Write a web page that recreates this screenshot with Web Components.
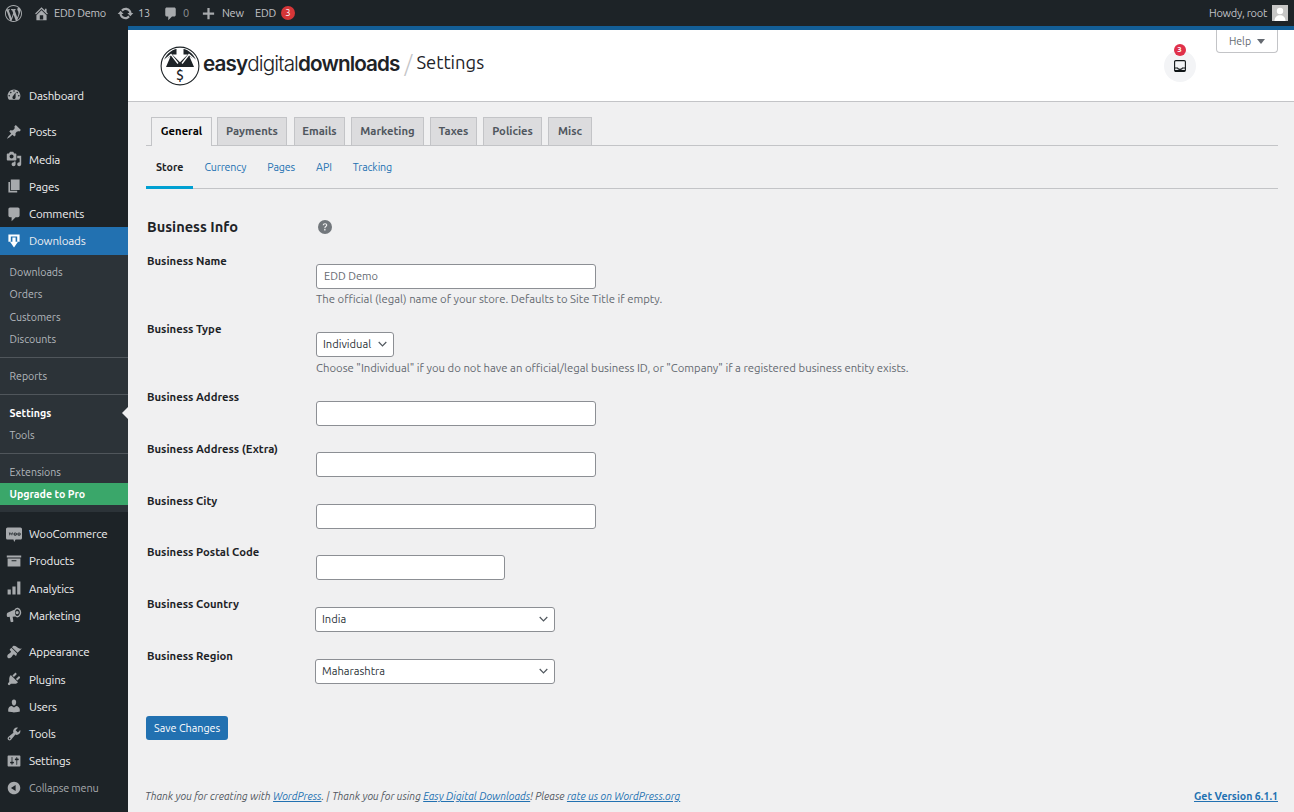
<!DOCTYPE html>
<html lang="en">
<head>
<meta charset="utf-8">
<title>Settings</title>
<style>
  html, body { margin: 0; height: 100%; background: #f0f0f1; }
  body { font-family: Ubuntu, "Noto Sans", sans-serif; font-size: 12px; color: #3c434a; overflow: hidden; }
  #shell { display: grid; grid-template-columns: 128px 1fr; grid-template-rows: 26px 786px; height: 812px; }
  wp-adminbar { grid-column: 1 / 3; }
</style>
</head>
<body>
<div id="shell">
  <wp-adminbar></wp-adminbar>
  <wp-sidebar></wp-sidebar>
  <edd-page></edd-page>
</div>

<script>
const ICONS = {
  wp: '<path d="M20 10c0-5.51-4.49-10-10-10C4.48 0 0 4.49 0 10c0 5.52 4.48 10 10 10 5.51 0 10-4.48 10-10zM7.78 15.37L4.37 6.22c.55-.02 1.17-.08 1.17-.08.5-.06.44-1.13-.06-1.11 0 0-1.45.11-2.37.11-.18 0-.37 0-.58-.01C4.12 2.69 6.87 1.11 10 1.11c2.33 0 4.45.87 6.05 2.34-.68-.11-1.65.39-1.65 1.58 0 .74.45 1.36.9 2.1.35.61.55 1.36.55 2.46 0 1.49-1.4 5-1.4 5l-3.03-8.37c.54-.02.82-.17.82-.17.5-.05.44-1.25-.06-1.22 0 0-1.44.12-2.38.12-.87 0-2.33-.12-2.33-.12-.5-.03-.56 1.2-.06 1.22l.92.08 1.26 3.41zM17.41 10c.24-.64.74-1.87.43-4.25.7 1.29 1.05 2.71 1.05 4.25 0 3.29-1.73 6.24-4.4 7.78.97-2.59 1.94-5.2 2.92-7.78zM6.1 18.09C3.12 16.65 1.11 13.53 1.11 10c0-1.3.23-2.48.72-3.59C3.25 10.3 4.67 14.2 6.1 18.09zm4.03-6.63l2.58 6.98c-.86.29-1.76.45-2.71.45-.79 0-1.57-.11-2.29-.33.81-2.38 1.62-4.74 2.42-7.1z"/>',
  home: '<path d="M16 8.5l1.53 1.53-1.06 1.06L10 4.62l-6.47 6.47-1.06-1.06L10 2.5l4 4v-2h2v4zm-6-2.46l6 5.99V18H4v-5.97zM12 17v-5H8v5h4z"/>',
  update: '<path d="M10.2 3.28c3.53 0 6.43 2.61 6.92 6h2.08l-3.5 4-3.5-4h2.32c-.45-1.97-2.21-3.45-4.32-3.45-1.45 0-2.73.71-3.54 1.78L4.95 5.66C6.23 4.2 8.11 3.28 10.2 3.28zm-.4 13.44c-3.52 0-6.43-2.61-6.92-6H.8l3.5-4c1.17 1.33 2.33 2.67 3.5 4H5.48c.45 1.97 2.21 3.45 4.32 3.45 1.45 0 2.73-.71 3.54-1.78l1.71 1.95c-1.28 1.46-3.15 2.38-5.25 2.38z"/>',
  comment: '<path d="M5 2h10c1.1 0 2 .9 2 2v8c0 1.1-.9 2-2 2h-3l-5 5v-5H5c-1.1 0-2-.9-2-2V4c0-1.1.9-2 2-2z"/>',
  plus: '<path d="M17.5 8.5v3h-6v6h-3v-6h-6v-3h6v-6h3v6h6z"/>',
  dashboard: '<path fill-rule="evenodd" d="M3.76 16h12.48c1.1-1.37 1.76-3.11 1.76-5 0-4.42-3.58-8-8-8s-8 3.58-8 8c0 1.89.66 3.63 1.76 5zM10 4c.55 0 1 .45 1 1s-.45 1-1 1-1-.45-1-1 .45-1 1-1zM6 6c.55 0 1 .45 1 1s-.45 1-1 1-1-.45-1-1 .45-1 1-1zm8 0c.55 0 1 .45 1 1s-.45 1-1 1-1-.45-1-1 .45-1 1-1zm-5.37 5.55L12 7v6c0 1.1-.9 2-2 2s-2-.9-2-2c0-.57.24-1.08.63-1.45zM4 10c.55 0 1 .45 1 1s-.45 1-1 1-1-.45-1-1 .45-1 1-1zm12 0c.55 0 1 .45 1 1s-.45 1-1 1-1-.45-1-1 .45-1 1-1z"/>',
  pin: '<path d="M10.44 3.02l1.82-1.82 6.36 6.35-1.83 1.82c-1.05-.68-2.48-.57-3.41.36l-.75.75c-.92.93-1.04 2.35-.35 3.41l-1.83 1.82-2.41-2.41-2.8 2.79c-.42.42-3.38 2.71-3.8 2.29s1.86-3.39 2.28-3.81l2.79-2.79L4.1 9.36l1.83-1.82c1.05.69 2.48.57 3.4-.36l.75-.75c.93-.92 1.05-2.35.36-3.41z"/>',
  media: '<path fill-rule="evenodd" d="M13 11V4c0-.55-.45-1-1-1h-1.67L9 1H5L3.67 3H2c-.55 0-1 .45-1 1v7c0 .55.45 1 1 1h10c.55 0 1-.45 1-1zM7 4.5c1.38 0 2.5 1.12 2.5 2.5S8.38 9.5 7 9.5 4.5 8.38 4.5 7 5.62 4.5 7 4.5zM14 6h5v10.5c0 1.38-1.12 2.5-2.5 2.5S14 17.88 14 16.5s1.12-2.5 2.5-2.5c.17 0 .34.02.5.05V9h-3V6zm-4 8.05V13h2v3.5c0 1.38-1.12 2.5-2.5 2.5S7 17.88 7 16.5 8.12 14 9.5 14c.17 0 .34.02.5.05z"/>',
  page: '<path d="M6 15V2h11v13H6zm-1 1h9v2H3V5h2v11z"/>',
  download: '<path d="M3 2h14v9h-3V4.500H6V11H3z"/><path d="M8 5.500h4V11h3l-5 7-5-7h3z"/>',
  woo: '<path fill-rule="evenodd" d="M2 2h16c1.100 0 2 .9 2 2v11c0 1.100-.9 2-2 2h-6l-1.800 3-.9-3H2c-1.100 0-2-.9-2-2V4c0-1.100.9-2 2-2zm1.500 6l1.200 4.300 1.400-3.200 1.400 3.200L8.600 8H7.500L7 10.100 6.100 8h-.2l-.9 2.100L4.500 8h-1zm8 0a2.100 2.100 0 100 4.300 2.100 2.100 0 000-4.300zm0 1.200a.9.9 0 110 1.800.9.9 0 010-1.800zm4.800-1.200a2.100 2.100 0 100 4.300 2.100 2.100 0 000-4.300zm0 1.200a.9.9 0 110 1.800.9.9 0 010-1.800z"/>',
  archive: '<path fill-rule="evenodd" d="M19 3v2.500H1V3h18zM2 7h16v10H2V7zm11 3V9H7v1.200h6V10z"/>',
  bars: '<path d="M2 12h4v6H2zM8 8h4v10H8zM14 2h4v16h-4z"/>',
  megaphone: '<path fill-rule="evenodd" d="M1 9c0-1 .6-1.600 1.600-2.100L11 3.200C11.600 1.900 12.700 1 14 1c2.800 0 5 2.900 5 6s-2.200 6-5 6c-.9 0-1.700-.4-2.300-1l-3.400.3.9 5.200c.1.6-.3 1.100-.9 1.200l-1.400.2c-.6.1-1-.2-1.200-.8L4.600 12.300 3 12.500C1.900 12.600 1 12 1 11V9zm13-6.300C12.300 2.700 11.300 4.800 11.300 7s1 4.300 2.700 4.300 3.300-2.100 3.300-4.300S15.700 2.700 14 2.700zM14 5a2 2 0 110 4 2 2 0 010-4z"/>',
  brush: '<path d="M14.48 11.06L7.41 3.99l1.5-1.5c.5-.56 2.3-.47 3.51.32 1.21.8 1.43 1.28 2.91 2.1 1.18.64 2.45 1.26 4.45.85zm-.71.71L6.7 4.7 4.93 6.47c-.39.39-.39 1.02 0 1.41l1.06 1.06c.39.39.39 1.03 0 1.42-.6.6-1.43 1.11-2.21 1.69-.35.26-.7.53-1.01.84-1.34 1.34-1.59 3.2-.55 4.3 1.1 1.04 2.96.79 4.3-.55.31-.31.58-.66.84-1.01.58-.78 1.09-1.61 1.69-2.21.39-.39 1.02-.39 1.41 0l1.06 1.06c.39.39 1.02.39 1.41 0z"/>',
  plugin: '<path d="M13.11 4.36L9.87 7.6 8 5.73l3.24-3.24c.35-.34 1.05-.2 1.56.32.52.51.66 1.21.31 1.55zm-8 1.77l.91-1.12 9.01 9.01-1.19.84c-.71.71-2.63 1.16-3.82 1.16H6.14L4.9 17.26c-.59.59-1.54.59-2.12 0-.59-.58-.59-1.53 0-2.12l1.24-1.24v-3.88c0-1.13.4-3.19 1.09-3.89zm7.26 3.97l3.24-3.24c.34-.35 1.04-.21 1.55.31.52.51.66 1.21.31 1.55l-3.24 3.25z"/>',
  users: '<path d="M10 9.25c-2.27 0-2.73-3.44-2.73-3.44C7 4.02 7.82 2 9.97 2c2.16 0 2.98 2.02 2.71 3.81 0 0-.41 3.44-2.68 3.44zm0 2.57L12.72 10c2.39 0 4.52 2.33 4.52 4.53v2.49s-3.65 1.13-7.24 1.13c-3.65 0-7.24-1.13-7.24-1.13v-2.49c0-2.25 1.94-4.48 4.47-4.48z"/>',
  tools: '<path fill-rule="evenodd" d="M16.68 9.77c-1.34 1.34-3.3 1.67-4.95.99l-5.41 6.52c-.99.99-2.59.99-3.58 0s-.99-2.59 0-3.57l6.52-5.42c-.68-1.65-.35-3.61.99-4.95 1.28-1.28 3.12-1.62 4.72-1.06l-2.89 2.89 2.82 2.82 2.86-2.87c.53 1.58.18 3.39-1.08 4.65zM3.81 16.21c.4.39 1.04.39 1.43 0 .4-.4.4-1.04 0-1.43-.39-.4-1.03-.4-1.43 0-.39.39-.39 1.03 0 1.43z"/>',
  settings: '<path fill-rule="evenodd" d="M18 16V4c0-.55-.45-1-1-1H3c-.55 0-1 .45-1 1v12c0 .55.45 1 1 1h14c.55 0 1-.45 1-1zM8 11h1c.55 0 1 .45 1 1s-.45 1-1 1H8v1.500c0 .28-.22.5-.5.5s-.5-.22-.5-.5V13H6c-.55 0-1-.45-1-1s.45-1 1-1h1V5.500c0-.28.22-.5.5-.5s.5.22.5.5V11zm5-2h-1c-.55 0-1-.45-1-1s.45-1 1-1h1V5.500c0-.28.22-.5.5-.5s.5.22.5.5V7h1c.55 0 1 .45 1 1s-.45 1-1 1h-1v5.500c0 .28-.22.5-.5.5s-.5-.22-.5-.5V9z"/>',
  collapse: '<path fill-rule="evenodd" d="M10 2.160c4.330 0 7.840 3.510 7.840 7.840s-3.510 7.840-7.840 7.840S2.160 14.330 2.160 10 5.710 2.160 10 2.160zm2 11.720V6.120L6.180 9.970z"/>'
};
const svg = (name, size) => `<svg width="${size}" height="${size}" viewBox="0 0 20 20" fill="currentColor" aria-hidden="true">${ICONS[name]}</svg>`;

class WpAdminbar extends HTMLElement {
  connectedCallback() {
    this.attachShadow({ mode: "open" }).innerHTML = `
      <style>
        :host { display: flex; align-items: center; height: 26px; background: #1d2327; color: #c3c4c7; font-size: 11px; letter-spacing: -.25px; }
        .item { display: flex; align-items: center; white-space: nowrap; }
        .item > span { margin-bottom: 1px; }
        svg { color: #a7aaad; flex: none; display: block; }
        .dim { color: #8c8f94; }
        .item > .badge { display: inline-block; width: 14px; height: 14px; line-height: 14px; border-radius: 50%; background: #d63638; color: #fff; font-size: 9.500px; text-align: center; margin: 0 0 0 5px; letter-spacing: 0; }
        .right { margin-left: auto; margin-right: 6px; gap: 5px; }
        .avatar { width: 16px; height: 16px; }
      </style>
      <div class="item" style="margin-left:5px">${svg("wp", 17)}</div>
      <div class="item" style="width:84px;margin-left:11px;gap:4px">${svg("home", 17)}<span>EDD Demo</span></div>
      <div class="item" style="width:46px;gap:4px">${svg("update", 17)}<span>13</span></div>
      <div class="item" style="width:38px;gap:5px">${svg("comment", 15)}<span class="dim">0</span></div>
      <div class="item" style="width:54px;gap:6px">${svg("plus", 15)}<span>New</span></div>
      <div class="item"><span>EDD</span><span class="badge">3</span></div>
      <div class="item right"><span>Howdy, root</span>
        <svg class="avatar" viewBox="0 0 16 16"><rect width="16" height="16" fill="#c6c6c6"/><circle cx="8" cy="6" r="3.200" fill="#fff"/><path d="M2.500 16c0-4 2.500-5.800 5.500-5.800s5.500 1.800 5.500 5.800z" fill="#fff"/></svg>
      </div>`;
  }
}

class WpSideItem extends HTMLElement {
  connectedCallback() {
    const current = this.hasAttribute("current");
    this.attachShadow({ mode: "open" }).innerHTML = `
      <style>
        :host { display: flex; align-items: center; height: 27.3px; color: #f0f0f1; background: ${current ? "#2271b1" : "none"}; font-size: 11.6px; letter-spacing: -.18px; }
        :host([dim]) { color: #a7aaad; font-size: 10.900px; }
        .ic { width: 29px; flex: none; display: flex; justify-content: center; padding-right: 1px; box-sizing: border-box; color: ${current ? "#fff" : "#a7aaad"}; }
        svg { display: block; }
      </style>
      <span class="ic">${svg(this.getAttribute("icon"), 16)}</span><slot></slot>`;
  }
}

class WpSubItem extends HTMLElement {
  connectedCallback() {
    this.attachShadow({ mode: "open" }).innerHTML = `
      <style>
        :host { display: flex; align-items: center; height: 22.33px; padding-left: 9.500px; color: #b4b9be; font-size: 10.600px; position: relative; }
        :host([strong]) { color: #fff; font-weight: 700; }
        :host([pro]) { background: #3aa76a; color: #fff; font-weight: 700; }
      </style><slot></slot>`;
  }
}

class WpSidebar extends HTMLElement {
  connectedCallback() {
    this.attachShadow({ mode: "open" }).innerHTML = `
      <style>
        :host { display: block; background: #1d2327; padding-top: 55.8px; }
        .gap { height: 9px; }
        .sub { background: #2c3338; padding-top: 6.400px; padding-bottom: 6.500px; }
        hr { border: 0; border-top: 1px solid #50565b; margin: 6.700px 0; }
        .cur { position: relative; }
        .cur::after { content: ""; position: absolute; right: 0; top: 50%; margin-top: -6px; border: 6px solid transparent; border-right-color: #f0f0f1; border-left: 0; }
      </style>
      <wp-side-item icon="dashboard">Dashboard</wp-side-item>
      <div class="gap"></div>
      <wp-side-item icon="pin">Posts</wp-side-item>
      <wp-side-item icon="media">Media</wp-side-item>
      <wp-side-item icon="page">Pages</wp-side-item>
      <wp-side-item icon="comment">Comments</wp-side-item>
      <wp-side-item icon="download" current>Downloads</wp-side-item>
      <div class="sub">
        <wp-sub-item>Downloads</wp-sub-item>
        <wp-sub-item>Orders</wp-sub-item>
        <wp-sub-item>Customers</wp-sub-item>
        <wp-sub-item>Discounts</wp-sub-item>
        <hr>
        <wp-sub-item>Reports</wp-sub-item>
        <hr>
        <wp-sub-item class="cur" strong>Settings</wp-sub-item>
        <wp-sub-item>Tools</wp-sub-item>
        <hr>
        <wp-sub-item>Extensions</wp-sub-item>
        <wp-sub-item pro>Upgrade to Pro</wp-sub-item>
      </div>
      <div class="gap" style="height:8.400px"></div>
      <wp-side-item icon="woo">WooCommerce</wp-side-item>
      <wp-side-item icon="archive">Products</wp-side-item>
      <wp-side-item icon="bars">Analytics</wp-side-item>
      <wp-side-item icon="megaphone">Marketing</wp-side-item>
      <div class="gap"></div>
      <wp-side-item icon="brush">Appearance</wp-side-item>
      <wp-side-item icon="plugin">Plugins</wp-side-item>
      <wp-side-item icon="users">Users</wp-side-item>
      <wp-side-item icon="tools">Tools</wp-side-item>
      <wp-side-item icon="settings">Settings</wp-side-item>
      <wp-side-item icon="collapse" dim>Collapse menu</wp-side-item>`;
  }
}

class EddHeader extends HTMLElement {
  connectedCallback() {
    this.attachShadow({ mode: "open" }).innerHTML = `
      <style>
        :host { display: flex; align-items: center; height: 71px; background: #fff; border-top: 4px solid #135e96; border-bottom: 1px solid #c3c4c7; padding: 0 16px 0 32px; position: relative; }
        .logo { display: flex; align-items: center; }
        .word { font-family: Inter, "Liberation Sans", sans-serif; font-size: 20.700px; letter-spacing: -0.9px; color: #1e2327; margin: 0 0 4px 3px; font-weight: 300; }
        .word b { font-weight: 600; }
        .slash { color: #c3c4c7; font-size: 22px; margin: 0 4px 4px 5px; font-weight: 300; }
        h1 { margin: 0 0 8px; font-size: 18.400px; font-weight: 400; color: #1d2327; }
        .bell { margin-left: auto; margin-right: 82px; position: relative; width: 32px; height: 32px; border-radius: 50%; background: #f3f4f6; display: flex; align-items: center; justify-content: center; }
        .count { position: absolute; top: -6px; left: 9.500px; width: 12px; height: 12px; line-height: 12px; border-radius: 50%; background: #e0314a; color: #fff; font-size: 8px; font-weight: 700; text-align: center; }
        .help { position: absolute; top: 0; right: 16px; width: 62px; height: 23px; box-sizing: border-box; background: #fff; border: 1px solid #c3c4c7; border-top: 0; border-radius: 0 0 4px 4px; color: #646970; font-size: 10.600px; display: flex; align-items: center; justify-content: center; gap: 6px; }
        .help i { border: 4px solid transparent; border-top: 5px solid #646970; border-bottom: 0; margin-top: 1px; }
      </style>
      <div class="logo">
        <svg width="40" height="40" viewBox="0 0 40 40" aria-hidden="true">
          <circle cx="20" cy="20" r="18.900" fill="#fff" stroke="#1d2327" stroke-width="1.100"/>
          <path fill="#1d2327" d="M4 14C7 7 13 2.500 20 2.500S33 7 36 14l-6.500-3.500L34 21H6l4.500-10.500z"/>
          <path fill="#fff" d="M16.500 2h7v6.500h4.300L20 16.300 12.200 8.500h4.300z"/>
          <path fill="none" stroke="#fff" stroke-width="1.300" d="M3.500 15l7.500-6.500 7 9M36.500 15L29 8.500l-7 9"/>
          <text x="20" y="34" text-anchor="middle" font-family="Ubuntu, Noto Sans, sans-serif" font-size="14" font-weight="500" fill="#1d2327">$</text>
        </svg>
        <span class="word"><b>easy</b>digital<b>downloads</b></span>
        <span class="slash">/</span>
        <h1>Settings</h1>
      </div>
      <div class="bell">
        <svg width="12" height="12" viewBox="0 0 12 12" fill="none" stroke="#101517" stroke-width="1.100" aria-hidden="true"><rect x=".6" y=".6" width="10.800" height="10.800" rx="1.200"/><path d="M.6 8h2.900c.3.9 1.100 1.400 2.500 1.400s2.200-.5 2.500-1.400h2.900"/><path d="M1 10.500h10"/></svg>
        <span class="count">3</span>
      </div>
      <div class="help">Help <i></i></div>`;
  }
}

class EddTabs extends HTMLElement {
  connectedCallback() {
    const tabs = [["General", 61, -1], ["Payments", 70, 1], ["Emails", 51, 0], ["Marketing", 73, 0], ["Taxes", 47, 0], ["Policies", 59, 0], ["Misc", 44, 0]];
    const subs = ["Store", "Currency", "Pages", "API", "Tracking"];
    this.attachShadow({ mode: "open" }).innerHTML = `
      <style>
        :host { display: block; font-size: 11px; }
        .tabs { display: flex; gap: 6px; padding-left: 5px; height: 28px; border-bottom: 1px solid #c3c4c7; }
        .tab { height: 28px; box-sizing: border-box; padding-bottom: 2px; display: flex; align-items: center; justify-content: center; border: 1px solid #c3c4c7; border-bottom: 0; background: #dcdcde; color: #50575e; font-weight: 700; font-size: 11.250px; }
        .tab.on { background: #f0f0f1; color: #000; height: 29px; padding-bottom: 3px; }
        .subs { display: flex; gap: 1px; height: 42px; border-bottom: 1px solid #c3c4c7; }
        .sub { padding: 0 10px; display: flex; align-items: center; color: #2271b1; font-size: 10.700px; letter-spacing: -.13px; height: 42px; box-sizing: border-box; }
        .sub.on { color: #1d2327; font-weight: 700; border-bottom: 3px solid #00a0d2; height: 43px; letter-spacing: 0; padding-top: 2px; }
      </style>
      <div class="tabs">${tabs.map(([t, w, m], i) => `<span class="tab${i ? "" : " on"}" style="width:${w}px;margin-right:${m}px">${t}</span>`).join("")}</div>
      <div class="subs">${subs.map((t, i) => `<span class="sub${i ? "" : " on"}">${t}</span>`).join("")}</div>`;
  }
}

class EddField extends HTMLElement {
  connectedCallback() {
    const label = this.getAttribute("label");
    const kind = this.getAttribute("kind") || "text";
    const value = this.getAttribute("value") || "";
    const width = this.getAttribute("width") || "280";
    const desc = this.getAttribute("desc");
    const chevron = `<svg width="9" height="6" viewBox="0 0 9 6" fill="none" stroke="#50575e" stroke-width="1.200" aria-hidden="true"><path d="M.7 1l3.800 3.800L8.300 1"/></svg>`;
    const control = kind === "select"
      ? `<div class="ctl sel" style="width:${width}px"><span>${value}</span>${chevron}</div>`
      : `<div class="ctl txt" style="width:${width}px">${value}</div>`;
    this.attachShadow({ mode: "open" }).innerHTML = `
      <style>
        :host { display: grid; grid-template-columns: 169px 1fr; height: var(--row, 52px); }
        .label { font-weight: 700; color: #1d2327; font-size: 11.300px; }
        .ctl { box-sizing: border-box; height: 24.500px; background: #fff; border: 1px solid #8c8f94; border-radius: 3px; display: flex; align-items: center; font-size: 11px; color: #2c3338; margin-top: var(--ctl-top, 10px); margin-left: var(--ctl-left, 0); }
        .txt { padding: 0 7px; color: #646970; }
        .sel { justify-content: space-between; padding: 0 6px; font-size: 11.150px; }
        .desc { color: #646970; font-size: 11.320px; margin-top: var(--desc-top, 3px); white-space: nowrap; }
      </style>
      <div class="label">${label}</div>
      <div>${control}${desc ? `<div class="desc">${desc}</div>` : ""}</div>`;
  }
}

class EddPage extends HTMLElement {
  connectedCallback() {
    this.attachShadow({ mode: "open" }).innerHTML = `
      <style>
        :host { display: flex; flex-direction: column; min-width: 0; }
        main { flex: 1; padding: 15px 16px 0 18px; }
        .head { display: grid; grid-template-columns: 171px 1fr; align-items: center; margin: 29px 0 0 1px; height: 18px; }
        h2 { margin: -2px 0 0; font-size: 14.600px; font-weight: 700; color: #1d2327; }
        .q { display: block; margin-left: -1px; }
        form { margin: 18px 0 0 1px; }
        .save { margin: 15px 0 0 0; display: inline-block; height: 24px; line-height: 24px; padding: 0 8px; background: #2271b1; color: #fff; font-size: 10.800px; border-radius: 3px; }
        footer { display: flex; justify-content: space-between; align-items: center; height: 24px; box-sizing: border-box; padding: 0 16px 8px 17px; font-size: 10.400px; font-style: italic; color: #50575e; }
        footer a { color: #2271b1; text-decoration: underline; }
        footer b { font-style: normal; font-size: 10.600px; color: #2271b1; text-decoration: underline; }
      </style>
      <edd-header></edd-header>
      <main>
        <edd-tabs></edd-tabs>
        <div class="head">
          <h2>Business Info</h2>
          <svg class="q" width="16" height="16" viewBox="0 0 16 16" aria-hidden="true"><circle cx="8" cy="8" r="7" fill="#72777c"/><path d="M5.700 6.200c.1-1.300 1-2 2.300-2 1.400 0 2.300.8 2.300 1.900 0 1.700-1.900 1.600-1.900 3.200H7.300c0-2.200 1.800-2.100 1.800-3.100 0-.5-.4-.9-1.100-.9-.7 0-1.100.4-1.200 1zM7.200 10h1.300v1.400H7.200z" fill="#f0f0f1"/></svg>
        </div>
        <form>
          <edd-field label="Business Name" value="EDD Demo" desc="The official (legal) name of your store. Defaults to Site Title if empty." style="--row:68px"></edd-field>
          <edd-field label="Business Type" kind="select" value="Individual" width="78" desc='Choose "Individual" if you do not have an official/legal business ID, or "Company" if a registered business entity exists.' style="--row:68px;--desc-top:4px"></edd-field>
          <edd-field label="Business Address" style="--ctl-top:11px"></edd-field>
          <edd-field label="Business Address (Extra)"></edd-field>
          <edd-field label="Business City" style="--row:51px"></edd-field>
          <edd-field label="Business Postal Code" width="189"></edd-field>
          <edd-field label="Business Country" kind="select" value="India" width="240" style="--ctl-left:-1px"></edd-field>
          <edd-field label="Business Region" kind="select" value="Maharashtra" width="240" style="--ctl-left:-1px"></edd-field>
        </form>
        <span class="save">Save Changes</span>
      </main>
      <footer>
        <span>Thank you for creating with <a>WordPress</a>. | Thank you for using <a>Easy Digital Downloads</a>! Please <a>rate us on WordPress.org</a></span>
        <b>Get Version 6.1.1</b>
      </footer>`;
  }
}

customElements.define("wp-adminbar", WpAdminbar);
customElements.define("wp-side-item", WpSideItem);
customElements.define("wp-sub-item", WpSubItem);
customElements.define("wp-sidebar", WpSidebar);
customElements.define("edd-header", EddHeader);
customElements.define("edd-tabs", EddTabs);
customElements.define("edd-field", EddField);
customElements.define("edd-page", EddPage);
</script>
</body>
</html>
